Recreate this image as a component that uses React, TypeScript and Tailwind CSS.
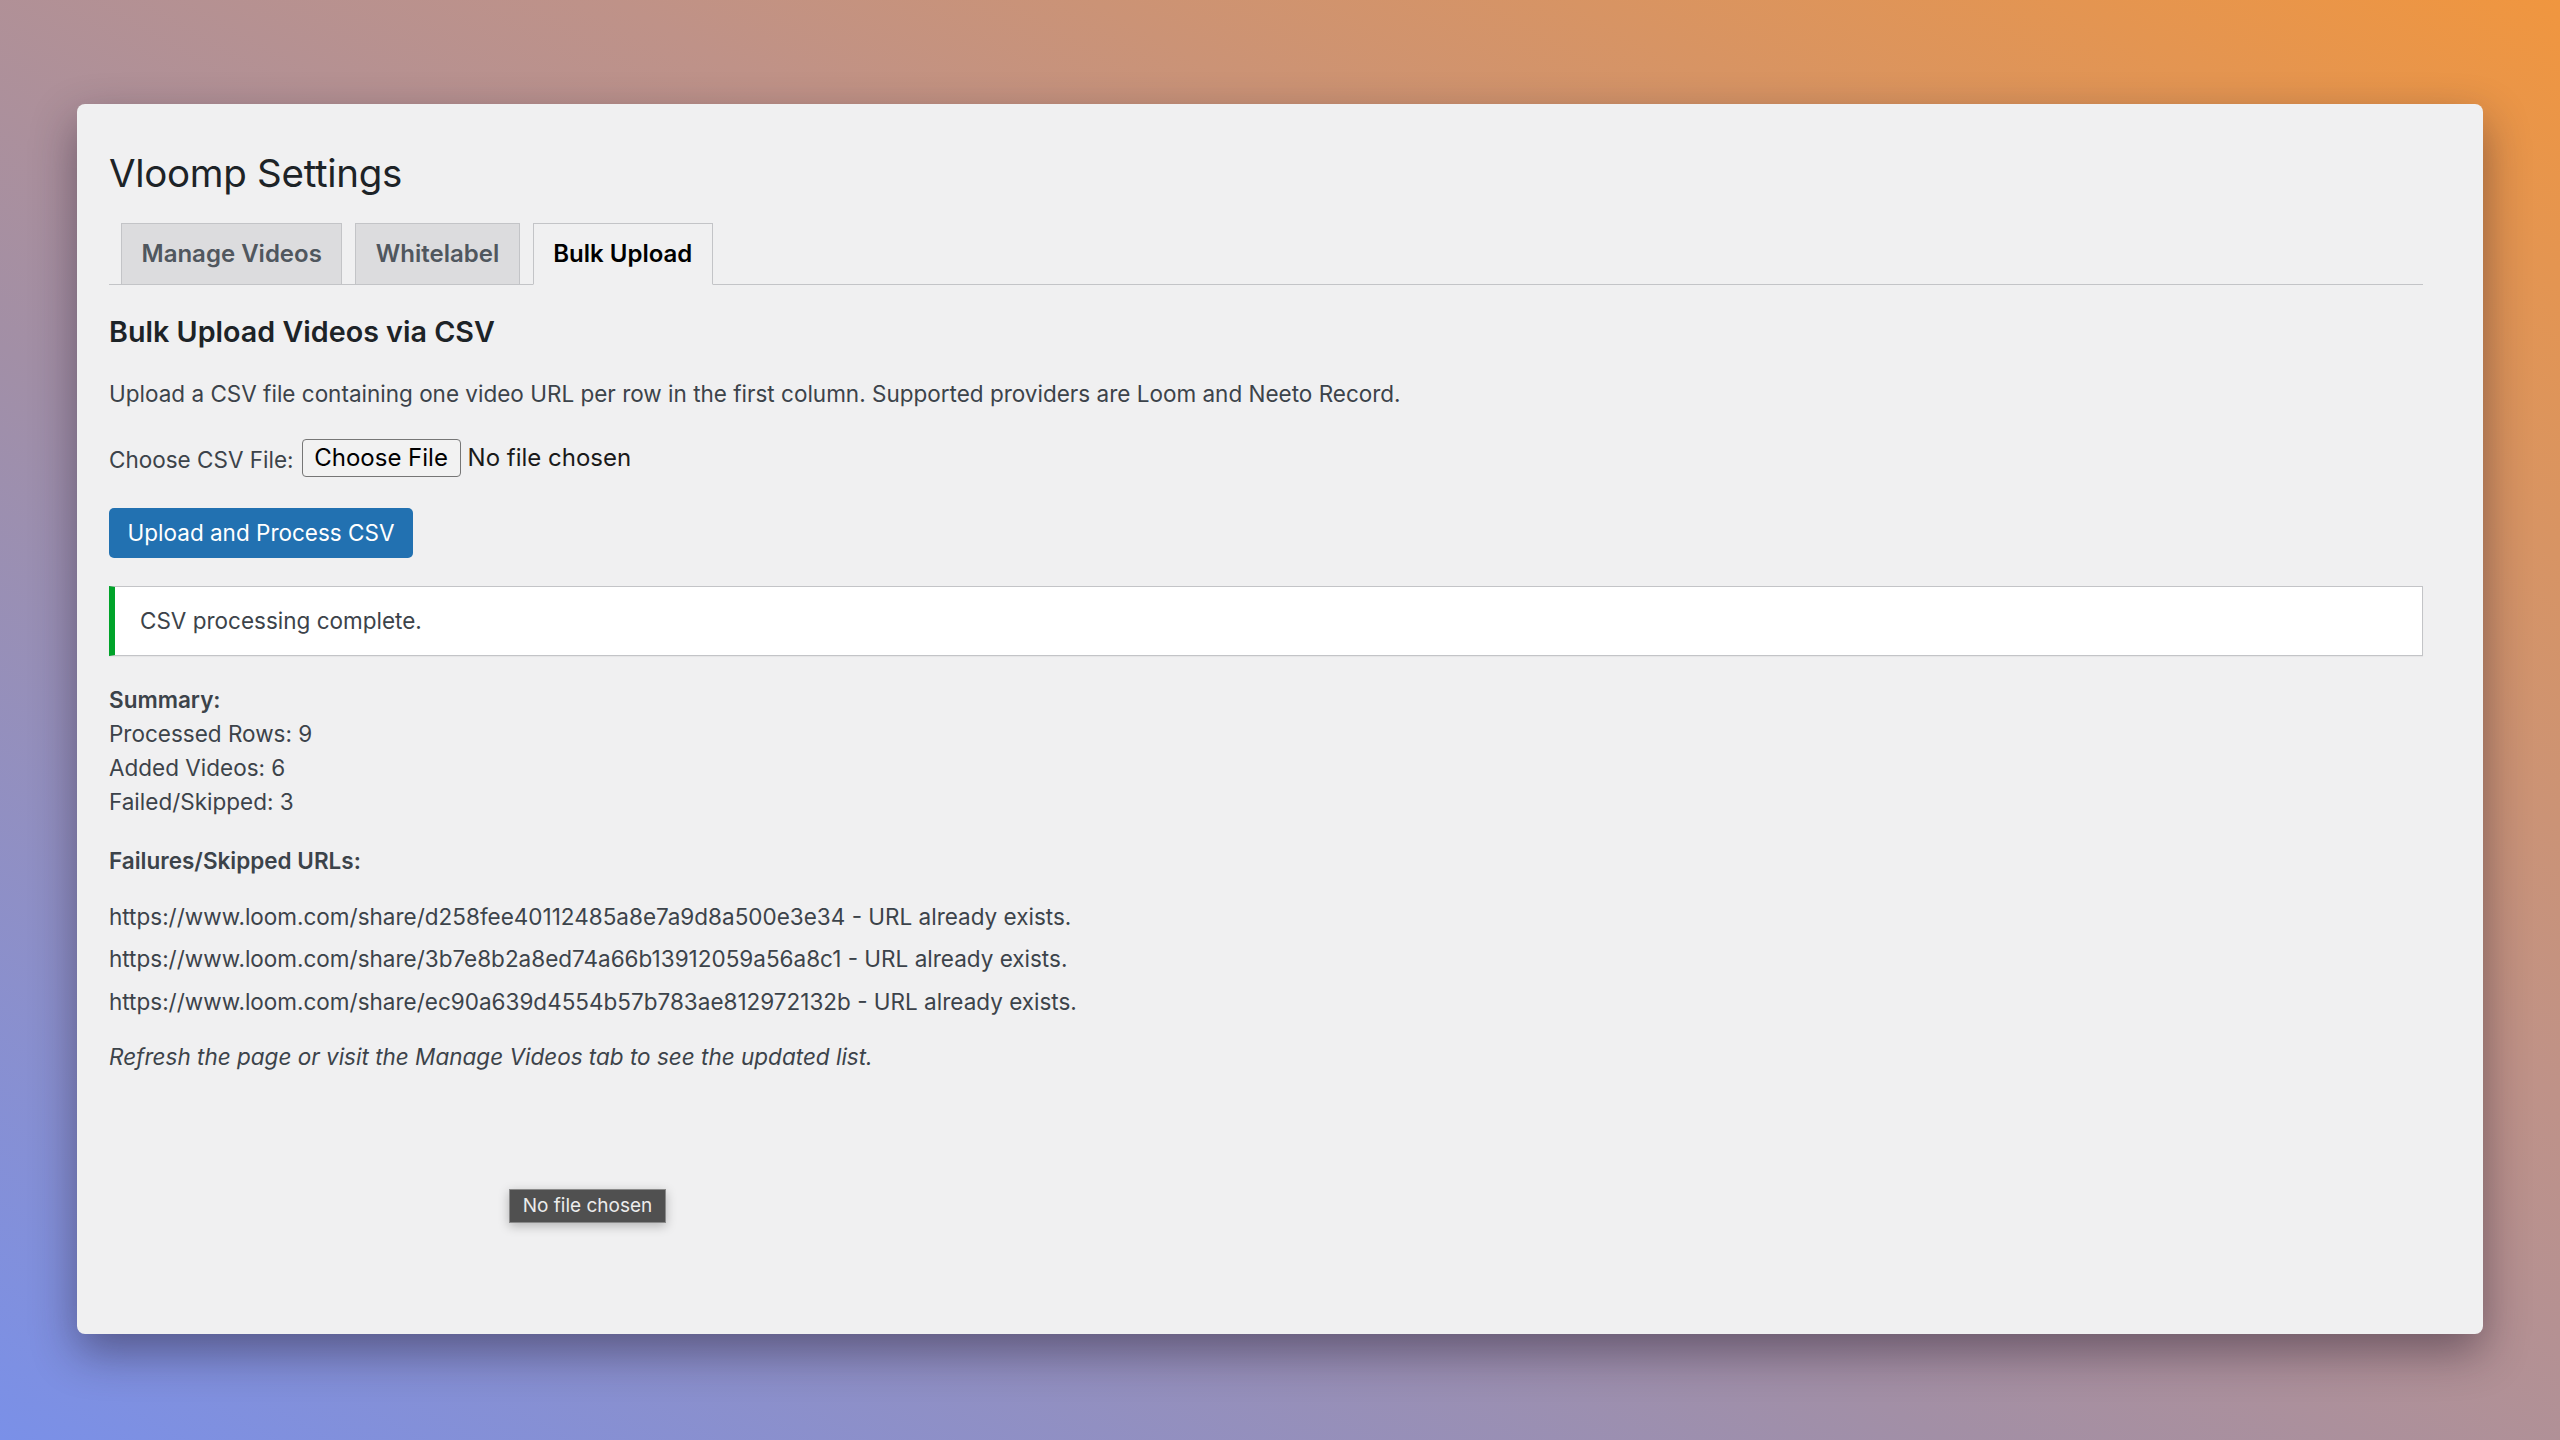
const urls = [
  "https://www.loom.com/share/d258fee40112485a8e7a9d8a500e3e34",
  "https://www.loom.com/share/3b7e8b2a8ed74a66b13912059a56a8c1",
  "https://www.loom.com/share/ec90a639d4554b57b783ae812972132b",
];

const tabs = [
  { label: "Manage Videos", active: false },
  { label: "Whitelabel", active: false },
  { label: "Bulk Upload", active: true },
];

export default function App() {
  return (
    <div className="w-[2560px] h-[1440px] overflow-hidden bg-[linear-gradient(to_top_right,#7a90e8_0%,#a28fa6_38%,#bf9288_62%,#f0963f_100%)] pt-[104px] pl-[77px] font-['Inter','Liberation_Sans',sans-serif]">
      <div className="relative w-[2406px] h-[1230px] rounded-[8px] bg-[#f0f0f1] shadow-[0_18px_45px_rgba(30,20,40,0.45)] pt-[43px] pl-[32px] pr-[60px] text-[#3c434a]">
        {/* title */}
        <h1 className="h-[52px] leading-[52px] text-[38.5px] font-normal text-[#1d2327] tracking-[-0.3px]">
          Vloomp Settings
        </h1>

        {/* tabs */}
        <div className="mt-[24px] flex h-[62px] items-end gap-[13px] border-b border-[#c3c4c7] pl-[12px]">
          {tabs.map((t) => (
            <div
              key={t.label}
              className={
                t.active
                  ? "-mb-px flex h-[62px] items-center border border-b-[#f0f0f1] border-[#c3c4c7] bg-[#f0f0f1] px-[19.5px] text-[24px] font-semibold text-black"
                  : "-mb-px flex h-[62px] items-center border border-[#c3c4c7] bg-[#dcdcde] px-[19.5px] text-[24px] font-semibold text-[#50575e]"
              }
            >
              {t.label}
            </div>
          ))}
        </div>

        {/* section */}
        <h2 className="mt-[27px] h-[40px] leading-[40px] text-[28.7px] font-semibold text-[#1d2327]">
          Bulk Upload Videos via CSV
        </h2>
        <p className="mt-[25px] leading-[34px] text-[22.5px]">
          Upload a CSV file containing one video URL per row in the first column. Supported providers are Loom and Neeto Record.
        </p>

        <div className="mt-[28px] flex h-[38px] items-center text-[22.5px]">
          <span className="mt-[4px]">Choose CSV File:</span>
          <span className="ml-[8px] flex h-[38px] w-[159px] items-center justify-center rounded-[4px] border border-[#767676] bg-[#f2f2f2] text-[24px] text-black">
            Choose File
          </span>
          <span className="ml-[7px] text-[24px] text-[#1a1a1a]">No file chosen</span>
        </div>

        <button className="mt-[31px] flex h-[50px] w-[304px] items-center justify-center rounded-[5px] bg-[#2271b1] text-[22.5px] text-white">
          Upload and Process CSV
        </button>

        {/* notice */}
        <div className="mt-[28px] flex h-[70px] items-center border border-l-[6px] border-[#c3c4c7] border-l-[#00a32a] bg-white pl-[25px] text-[22.5px] shadow-[0_1px_1px_rgba(0,0,0,0.04)]">
          CSV processing complete.
        </div>

        {/* summary */}
        <div className="mt-[27px] text-[22.5px] leading-[34px]">
          <p className="font-semibold">Summary:</p>
          <p>Processed Rows: 9</p>
          <p>Added Videos: 6</p>
          <p>Failed/Skipped: 3</p>
        </div>

        <p className="mt-[24.5px] text-[22.5px] leading-[34px] font-semibold">Failures/Skipped URLs:</p>

        <div className="mt-[22px] flex flex-col gap-[8.5px] text-[22.5px] leading-[34px]">
          {urls.map((u) => (
            <p key={u}>{u} - URL already exists.</p>
          ))}
        </div>

        <p className="mt-[21px] text-[22.5px] leading-[34px] italic">
          Refresh the page or visit the Manage Videos tab to see the updated list.
        </p>

        {/* tooltip */}
        <div className="absolute left-[432px] top-[1085px] flex h-[34px] w-[157px] items-center justify-center border border-[#8a8a8a] bg-[#505050] text-[19px] text-[#ececec] shadow-[0_3px_10px_rgba(0,0,0,0.25)]">
          No file chosen
        </div>
      </div>
    </div>
  );
}
